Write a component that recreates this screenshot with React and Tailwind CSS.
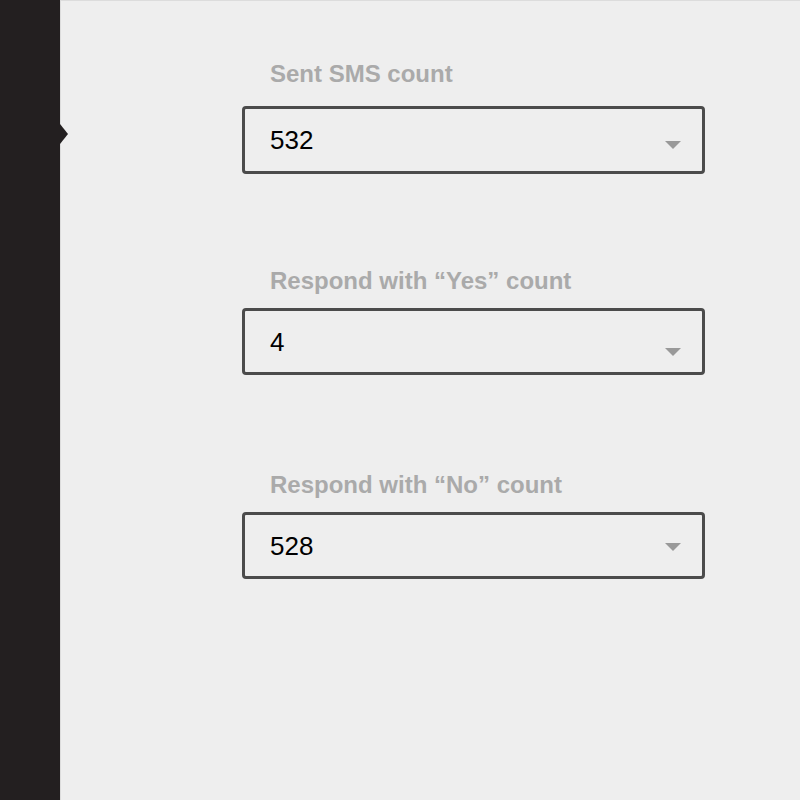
import React from 'react';

const fields = [
  { label: 'Sent SMS count', value: '532', wrap: 'mt-0', gap: 'mb-[20px]', box: 'h-[68px]', arrow: 'top-[32px]' },
  { label: 'Respond with “Yes” count', value: '4', wrap: 'mt-[95px]', gap: 'mb-[15px]', box: 'h-[67px]', arrow: 'top-[37px]' },
  { label: 'Respond with “No” count', value: '528', wrap: 'mt-[98px]', gap: 'mb-[15px]', box: 'h-[67px]', arrow: 'top-[28px]' },
];

const App = () => {
  return (
    <div
      className="flex w-[800px] h-[800px] overflow-hidden bg-[#eeeeee]"
      style={{ fontFamily: '"Liberation Sans", Arial, sans-serif' }}
    >
      {/* sidebar with the little pointer */}
      <div className="relative w-[60px] h-full shrink-0 bg-[#231f20]">
        <div className="absolute left-[60px] top-[124px] w-0 h-0 border-y-[10px] border-y-transparent border-l-[8px] border-l-[#231f20]" />
      </div>

      <div className="flex-1 h-full border-t border-l border-[#dcdcdc] pl-[181px] pt-[61px]">
        {fields.map((f) => (
          <div key={f.label} className={f.wrap}>
            <div className={`pl-[28px] text-[24px] leading-none font-bold text-[#aaaaaa] ${f.gap}`}>
              {f.label}
            </div>
            <div
              className={`relative w-[463px] ${f.box} flex items-center border-[3px] border-[#4b4b4b] rounded-[4px] pl-[25px]`}
            >
              <span className="text-[26px] leading-none text-black">{f.value}</span>
              <span
                className={`absolute right-[21px] ${f.arrow} w-0 h-0 border-x-[8px] border-x-transparent border-t-[8px] border-t-[#999999]`}
              />
            </div>
          </div>
        ))}
      </div>
    </div>
  );
};

export default App;
